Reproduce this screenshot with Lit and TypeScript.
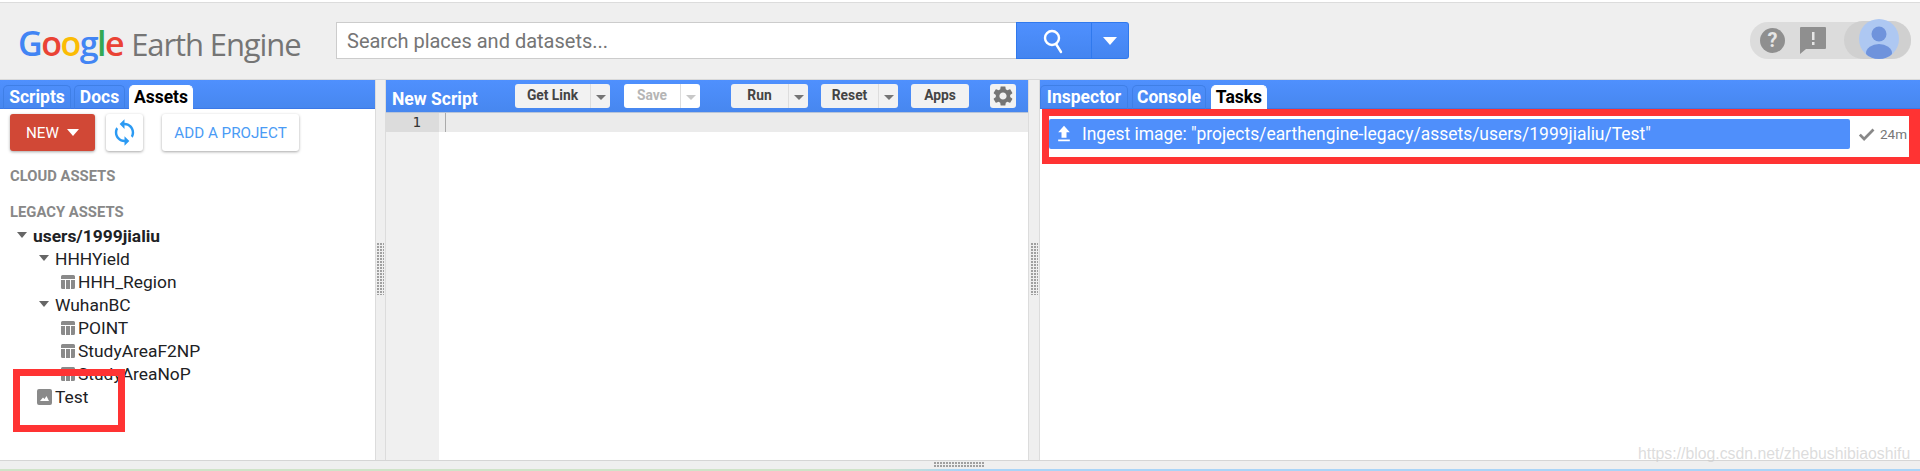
import { LitElement, html, css, svg } from "lit";
import { customElement } from "lit/decorators.js";

const arrow = html`<svg class="tri" viewBox="0 0 10 6"><path d="M0 0h10L5 6z" /></svg>`;
const tableIcon = html`<svg class="leaf" viewBox="0 0 14 14">
  <path d="M1.5 0h11A1.5 1.5 0 0 1 14 1.500V4H0V1.500A1.500 1.500 0 0 1 1.500 0zM0 5h4v9H1.500A1.500 1.500 0 0 1 0 12.500zM5 5h4v9H5zM10 5h4v7.500a1.500 1.500 0 0 1-1.500 1.500H10z" />
</svg>`;
const imageIcon = html`<svg class="img" viewBox="0 0 15 16">
  <path fill-rule="evenodd" d="M2 0h11a2 2 0 0 1 2 2v12a2 2 0 0 1-2 2H2a2 2 0 0 1-2-2V2a2 2 0 0 1 2-2zM3 12h9L9.500 7 7.500 10 6 8.500z" />
</svg>`;

const tree = [
  { indent: 17, icon: arrow, label: "users/1999jialiu", root: true },
  { indent: 39, icon: arrow, label: "HHHYield" },
  { indent: 61, icon: tableIcon, label: "HHH_Region" },
  { indent: 39, icon: arrow, label: "WuhanBC" },
  { indent: 61, icon: tableIcon, label: "POINT" },
  { indent: 61, icon: tableIcon, label: "StudyAreaF2NP" },
  { indent: 61, icon: tableIcon, label: "StudyAreaNoP" },
  { indent: 37, icon: imageIcon, label: "Test" },
];

const toolbar = [
  { label: "Get Link", width: 75, menu: true, gap: 14 },
  { label: "Save", width: 56, menu: true, off: true, gap: 31 },
  { label: "Run", width: 57, menu: true, gap: 13 },
  { label: "Reset", width: 57, menu: true, gap: 13 },
  { label: "Apps", width: 58, gap: 21 },
];

const gearPath = svg`<path d="M19.14 12.94c.04-.3.06-.61.06-.94 0-.32-.02-.64-.07-.94l2.03-1.58c.18-.14.23-.41.12-.61l-1.92-3.32c-.12-.22-.37-.29-.59-.22l-2.39.96c-.5-.38-1.03-.7-1.62-.94l-.36-2.54c-.04-.24-.24-.41-.48-.41h-3.84c-.24 0-.43.17-.47.41l-.36 2.54c-.59.24-1.13.57-1.62.94l-2.39-.96c-.22-.08-.47 0-.59.22L2.74 8.87c-.12.21-.08.47.12.61l2.03 1.58c-.05.3-.09.63-.09.94s.02.64.07.94l-2.03 1.58c-.18.14-.23.41-.12.61l1.92 3.32c.12.22.37.29.59.22l2.39-.96c.5.38 1.03.7 1.62.94l.36 2.54c.05.24.24.41.48.41h3.84c.24 0 .44-.17.47-.41l.36-2.54c.59-.24 1.13-.56 1.62-.94l2.39.96c.22.08.47 0 .59-.22l1.92-3.32c.12-.22.07-.47-.12-.61l-2.01-1.58zM12 15.6c-1.98 0-3.6-1.62-3.6-3.6s1.62-3.6 3.6-3.6 3.6 1.62 3.6 3.6-1.62 3.6-3.6 3.6z" />`;

@customElement("app-root")
export class AppRoot extends LitElement {
  static styles = css`
    :host {
      display: block;
      position: relative;
      width: 1920px;
      height: 471px;
      overflow: hidden;
      background: #fff;
      font-family: Roboto, "Liberation Sans", sans-serif;
      color: #222;
    }

    .page {
      display: flex;
      flex-direction: column;
      height: 100%;
    }

    /* top bar */
    .top {
      box-sizing: border-box;
      height: 78px;
      margin-top: 2px;
      flex: none;
      border-top: 1px solid #dcdcdc;
      border-bottom: 1px solid #d9d9d9;
      background: #efefef;
      display: flex;
      align-items: flex-start;
      padding: 19px 0 0 18px;
    }

    .logo {
      width: 318px;
      flex: none;
      display: flex;
      align-items: baseline;
      gap: 8px;
      height: 42px;
      line-height: 42px;
      white-space: nowrap;
      font-family: "Open Sans", sans-serif;
    }

    .google {
      font-size: 34px;
      letter-spacing: -1.5px;
      font-weight: 600;
    }

    .earth {
      font-size: 31px;
      color: #757575;
      letter-spacing: -1.1px;
    }

    .b { color: #4285f4; }
    .r { color: #ea4335; }
    .y { color: #fbbc05; }
    .g { color: #34a853; }

    .search {
      box-sizing: border-box;
      width: 680px;
      height: 37px;
      background: #fff;
      border: 1px solid #ccc;
      border-right: 0;
      display: flex;
      align-items: center;
      padding-left: 10px;
      color: #757575;
      font-size: 20px;
    }

    .search-btn,
    .search-menu {
      box-sizing: border-box;
      height: 37px;
      background: linear-gradient(#4f90fe, #4485f0);
      border: 1px solid #3079ed;
      display: flex;
      align-items: center;
      justify-content: center;
    }

    .search-btn {
      width: 76px;
    }

    .search-btn svg {
      width: 24px;
      height: 26px;
    }

    .search-menu {
      width: 37px;
      border-left: 0;
      border-radius: 0 3px 3px 0;
    }

    .search-menu svg {
      width: 14px;
      height: 8px;
      fill: #fff;
    }

    .account {
      margin-left: auto;
      margin-right: 9px;
      width: 161px;
      height: 37px;
      background: #dcdcdc;
      border-radius: 18px;
      position: relative;
      display: flex;
      align-items: center;
      padding-left: 10px;
      box-sizing: border-box;
      gap: 15px;
    }

    .help {
      width: 25px;
      height: 25px;
      border-radius: 50%;
      background: #8f8f8f;
      color: #e6e6e6;
      font-size: 20px;
      font-weight: 700;
      line-height: 25px;
      text-align: center;
      flex: none;
    }

    .feedback {
      width: 26px;
      height: 27px;
      flex: none;
    }

    .avatar-pill {
      position: absolute;
      right: 0;
      top: -1px;
      width: 67px;
      height: 38px;
      border-radius: 19px;
      background: #d0d0d0;
    }

    .avatar {
      position: absolute;
      left: 15px;
      top: -2px;
      width: 40px;
      height: 40px;
      border-radius: 50%;
      background: #aec8f2;
      overflow: hidden;
    }

    .avatar svg {
      display: block;
      width: 40px;
      height: 40px;
    }

    /* panels */
    .main {
      flex: 1;
      min-height: 0;
      display: flex;
    }

    .gutter {
      flex: none;
      box-sizing: border-box;
      background: #efefef;
      border-left: 1px solid #dcdcdc;
      border-right: 1px solid #dcdcdc;
      display: flex;
      align-items: flex-start;
      justify-content: center;
      padding-top: 163px;
    }

    .grip {
      width: 7px;
      height: 52px;
      background-image: radial-gradient(circle at 1px 1px, #a0a0a0 0.9px, transparent 1px);
      background-size: 3px 3px;
    }

    .left {
      width: 375px;
      flex: none;
      display: flex;
      flex-direction: column;
    }

    .middle {
      width: 642px;
      flex: none;
      display: flex;
      flex-direction: column;
    }

    .right {
      flex: 1;
      min-width: 0;
      display: flex;
      flex-direction: column;
    }

    .tabs {
      box-sizing: border-box;
      height: 29px;
      background: linear-gradient(#4f90fe, #4787ef);
      border-bottom: 1px solid #3b78e7;
      display: flex;
      align-items: flex-end;
      flex: none;
    }

    .tab {
      box-sizing: border-box;
      height: 24px;
      margin-bottom: -1px;
      border: 1px solid #3f7fe6;
      border-bottom: 0;
      border-radius: 5px 5px 0 0;
      color: #fff;
      font-size: 17.500px;
      font-weight: 700;
      line-height: 23px;
      text-align: center;
      white-space: nowrap;
    }

    .tab.on {
      background: #fff;
      border-color: #fff;
      color: #000;
    }

    /* assets */
    .actions {
      display: flex;
      padding: 5px 0 0 10px;
    }

    .act {
      box-sizing: border-box;
      height: 37px;
      border-radius: 3px;
      background: #fff;
      box-shadow: 0 1px 3px rgba(0, 0, 0, 0.35);
      display: flex;
      align-items: center;
      justify-content: center;
      font-size: 15.200px;
      color: #4a9bf5;
    }

    .new {
      width: 85px;
      margin-right: 11px;
      background: #d14836;
      color: #fff;
      gap: 8px;
    }

    .new svg {
      width: 12px;
      height: 7px;
      fill: #fff;
    }

    .sync {
      width: 37px;
      margin-right: 19px;
    }

    .sync svg {
      width: 29px;
      height: 29px;
      fill: #2b9af3;
    }

    .project {
      width: 137px;
    }

    .heading {
      margin: 0 0 0 10px;
      font-size: 14.800px;
      font-weight: 700;
      line-height: 20px;
      color: #888;
    }

    .cloud {
      margin-top: 15px;
    }

    .legacy {
      margin-top: 16px;
    }

    .tree {
      margin-top: 3px;
    }

    .row {
      box-sizing: border-box;
      display: flex;
      align-items: center;
      height: 22.900px;
      font-size: 17.400px;
      color: #202124;
      white-space: nowrap;
    }

    .row.root {
      font-weight: 700;
    }

    .tri {
      width: 10px;
      height: 6px;
      margin: 0 6px 3px 0;
      fill: #666;
      flex: none;
    }

    .leaf {
      width: 14px;
      height: 14px;
      margin-right: 3px;
      fill: #8a8a8a;
      flex: none;
    }

    .img {
      width: 15px;
      height: 16px;
      margin-right: 3px;
      fill: #8a8a8a;
      flex: none;
    }

    /* editor */
    .toolbar {
      box-sizing: border-box;
      height: 33px;
      flex: none;
      background: linear-gradient(#4f90fe, #4787ef);
      border-bottom: 1px solid #b8c4d8;
      display: flex;
      align-items: center;
      padding-left: 6px;
    }

    .title {
      width: 123px;
      flex: none;
      color: #fff;
      font-size: 17.500px;
      font-weight: 700;
      padding-top: 5px;
    }

    .btn {
      box-sizing: border-box;
      height: 24px;
      flex: none;
      display: flex;
      background: #f2f2f2;
      border-radius: 3px;
      font-size: 13.800px;
      font-weight: 700;
      color: #444;
      line-height: 23px;
      text-align: center;
    }

    .btn .label {
      flex: 1;
    }

    .btn .menu {
      width: 20px;
      flex: none;
      border-left: 1px solid #ddd;
      box-sizing: border-box;
      display: flex;
      align-items: center;
      justify-content: center;
    }

    .btn .menu svg {
      width: 10px;
      height: 5px;
      fill: #757575;
      margin-top: 3px;
    }

    .btn.off {
      background: #fff;
      color: #b5b5b5;
    }

    .btn.off .menu svg {
      fill: #c8c8c8;
    }

    .gear {
      box-sizing: border-box;
      width: 26px;
      height: 24px;
      flex: none;
      background: #f2f2f2;
      border-radius: 3px;
      display: flex;
      align-items: center;
      justify-content: center;
    }

    .gear svg {
      width: 24px;
      height: 24px;
      fill: #757575;
    }

    .code {
      flex: 1;
      min-height: 0;
      display: flex;
    }

    .lines {
      width: 53px;
      flex: none;
      background: #f0f0f0;
    }

    .num {
      height: 19px;
      background: #dcdcdc;
      font-family: "DejaVu Sans Mono", monospace;
      font-size: 14px;
      line-height: 19px;
      text-align: right;
      padding-right: 18px;
      color: #333;
    }

    .content {
      flex: 1;
    }

    .active {
      height: 19px;
      background: #ebebeb;
      box-sizing: border-box;
      padding-left: 6px;
    }

    .cursor {
      width: 1px;
      height: 19px;
      background: #aaa;
    }

    /* tasks */
    .hl {
      box-sizing: border-box;
      flex: none;
      height: 55px;
      margin-left: 2px;
      border: 7px solid #ff3333;
      border-right-width: 11px;
      display: flex;
      align-items: flex-start;
      padding-top: 3px;
    }

    .task {
      box-sizing: border-box;
      width: 801px;
      height: 30px;
      flex: none;
      background: #4f8ffb;
      border-radius: 2px;
      color: #fff;
      font-size: 17.450px;
      display: flex;
      align-items: center;
      padding-left: 5px;
      gap: 8px;
      white-space: nowrap;
    }

    .task svg {
      width: 20px;
      height: 22px;
      fill: #fff;
      flex: none;
    }

    .status {
      display: flex;
      align-items: center;
      margin-left: 7px;
      height: 30px;
      color: #777;
      font-size: 13.500px;
      gap: 4px;
      white-space: nowrap;
    }

    .status svg {
      width: 19px;
      height: 19px;
      fill: #888;
      stroke: #888;
      stroke-width: 1.500;
      flex: none;
    }

    /* bottom */
    .bottom {
      box-sizing: border-box;
      height: 9px;
      flex: none;
      background: #efefef;
      border-top: 1px solid #d5d5d5;
      padding: 1px 0 0 934px;
    }

    .bottom .grip {
      width: 51px;
      height: 6px;
    }

    .map {
      height: 2px;
      flex: none;
      background: linear-gradient(90deg, #cfe3c8 0 46%, #a9d4f7 50%);
    }

    .mark {
      position: absolute;
      left: 1638px;
      top: 445px;
      font-family: "Liberation Sans", sans-serif;
      font-size: 15.800px;
      line-height: 17px;
      color: rgba(205, 205, 205, 0.7);
    }

    .box {
      position: absolute;
      left: 13px;
      top: 369px;
      width: 112px;
      height: 63px;
      box-sizing: border-box;
      border: 7px solid #ff3333;
    }
  `;

  private renderTabs(tabs: { label: string; width: number; gap: number; on?: boolean }[], start: number) {
    return html`<div class="tabs" style="padding-left:${start}px">
      ${tabs.map(
        (t) =>
          html`<div class="tab ${t.on ? "on" : ""}" style="width:${t.width}px;margin-right:${t.gap}px">${t.label}</div>`,
      )}
    </div>`;
  }

  render() {
    return html`
      <div class="page">
        <header class="top">
          <div class="logo">
            <span class="google"><span class="b">G</span><span class="r">o</span><span class="y">o</span><span class="b">g</span><span class="g">l</span><span class="r">e</span></span>
            <span class="earth">Earth Engine</span>
          </div>
          <div class="search">Search places and datasets...</div>
          <div class="search-btn">
            <svg viewBox="0 0 24 26" fill="none" stroke="#fff" stroke-width="2.400">
              <circle cx="10" cy="10" r="7" />
              <path d="M14 16l5 8" stroke-linecap="round" />
            </svg>
          </div>
          <div class="search-menu"><svg viewBox="0 0 14 8"><path d="M0 0h14L7 8z" /></svg></div>
          <div class="account">
            <div class="help">?</div>
            <svg class="feedback" viewBox="0 0 26 27">
              <path fill="#8f8f8f" d="M1 0h24a1 1 0 0 1 1 1v20a1 1 0 0 1-1 1H6l-6 5V1a1 1 0 0 1 1-1z" />
              <path fill="#e6e6e6" d="M12 5h2.500v8H12zM12 15h2.500v3H12z" />
            </svg>
            <div class="avatar-pill">
              <div class="avatar">
                <svg viewBox="0 0 40 40">
                  <circle cx="20" cy="15" r="7.500" fill="#6f93dc" />
                  <ellipse cx="20" cy="34" rx="13" ry="9" fill="#6f93dc" />
                </svg>
              </div>
            </div>
          </div>
        </header>

        <div class="main">
          <section class="left">
            ${this.renderTabs(
              [
                { label: "Scripts", width: 68, gap: 3 },
                { label: "Docs", width: 51, gap: 4 },
                { label: "Assets", width: 64, gap: 0, on: true },
              ],
              3,
            )}
            <div class="actions">
              <div class="act new">NEW <svg viewBox="0 0 12 7"><path d="M0 0h12L6 7z" /></svg></div>
              <div class="act sync">
                <svg viewBox="0 0 24 24">
                  <path d="M12 4V1L8 5l4 4V6c3.310 0 6 2.690 6 6 0 1.010-.25 1.970-.7 2.800l1.460 1.460C19.540 15.030 20 13.570 20 12c0-4.420-3.580-8-8-8zm0 14c-3.310 0-6-2.690-6-6 0-1.010.25-1.970.7-2.800L5.240 7.740C4.460 8.970 4 10.430 4 12c0 4.420 3.580 8 8 8v3l4-4-4-4v3z" />
                </svg>
              </div>
              <div class="act project">ADD A PROJECT</div>
            </div>
            <div class="heading cloud">CLOUD ASSETS</div>
            <div class="heading legacy">LEGACY ASSETS</div>
            <div class="tree">
              ${tree.map(
                (r) =>
                  html`<div class="row ${r.root ? "root" : ""}" style="padding-left:${r.indent}px">${r.icon}${r.label}</div>`,
              )}
            </div>
          </section>

          <div class="gutter" style="width:11px"><div class="grip"></div></div>

          <section class="middle">
            <div class="toolbar">
              <div class="title">New Script</div>
              ${toolbar.map(
                (b) => html`<div
                  class="btn ${b.off ? "off" : ""}"
                  style="width:${b.width + (b.menu ? 20 : 0)}px;margin-right:${b.gap}px"
                >
                  <span class="label">${b.label}</span>
                  ${b.menu
                    ? html`<span class="menu"><svg viewBox="0 0 10 5"><path d="M0 0h10L5 5z" /></svg></span>`
                    : ""}
                </div>`,
              )}
              <div class="gear"><svg viewBox="0 0 24 24">${gearPath}</svg></div>
            </div>
            <div class="code">
              <div class="lines"><div class="num">1</div></div>
              <div class="content">
                <div class="active"><div class="cursor"></div></div>
              </div>
            </div>
          </section>

          <div class="gutter" style="width:12px"><div class="grip"></div></div>

          <section class="right">
            ${this.renderTabs(
              [
                { label: "Inspector", width: 88, gap: 4 },
                { label: "Console", width: 74, gap: 5 },
                { label: "Tasks", width: 56, gap: 0, on: true },
              ],
              0,
            )}
            <div class="hl">
              <div class="task">
                <svg viewBox="0 0 24 24" preserveAspectRatio="none"><path d="M9 16h6v-6h4l-7-7-7 7h4zm-4 2h14v2H5z" /></svg>
                <span>Ingest image: "projects/earthengine-legacy/assets/users/1999jialiu/Test"</span>
              </div>
              <div class="status">
                <svg viewBox="0 0 24 24"><path d="M9 16.170L4.830 12l-1.420 1.410L9 19 21 7l-1.410-1.410z" /></svg>
                24m
              </div>
            </div>
          </section>
        </div>

        <div class="bottom"><div class="grip"></div></div>
        <div class="map"></div>
      </div>
      <div class="box"></div>
      <div class="mark">https://blog.csdn.net/zhebushibiaoshifu</div>
    `;
  }
}
